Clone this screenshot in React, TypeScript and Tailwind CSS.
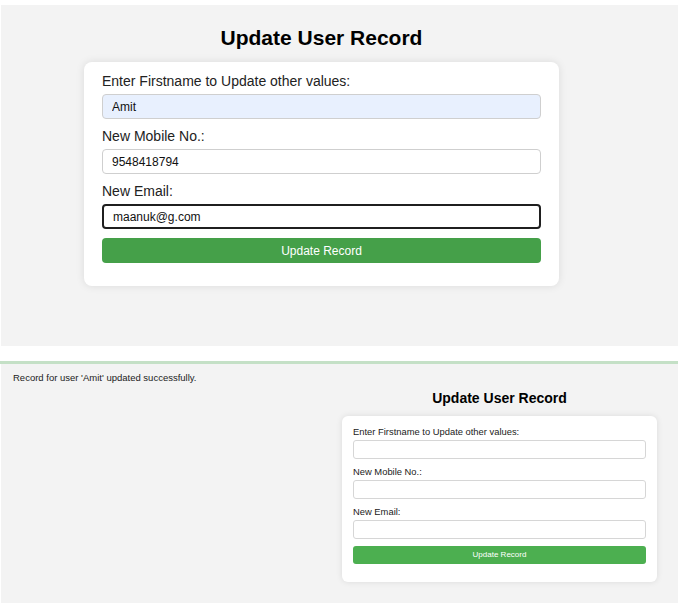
import React from 'react';

type Size = 'large' | 'small';

const styles = {
  large: {
    title: 'text-[21px] leading-[24px] font-bold text-black text-center mb-[12px]',
    card: 'bg-white rounded-[8px] shadow-[0_0_8px_rgba(0,0,0,0.1)] pt-[11px] pb-[23px] px-[18px]',
    label: 'block text-[14px] leading-[16px] text-[#222] mb-[5px]',
    input: 'block w-full h-[25px] px-[9px] text-[12px] text-[#111] rounded-[4px] mb-[9px] outline-none',
    border: 'border border-[#cfcfcf]',
    button: 'block w-full h-[25px] rounded-[4px] bg-[#45a049] text-white text-[12px]',
  },
  small: {
    title: 'text-[14px] leading-[16px] font-bold text-black text-center mb-[10px]',
    card: 'bg-white rounded-[6px] shadow-[0_0_6px_rgba(0,0,0,0.1)] pt-[10px] pb-[18px] px-[11px]',
    label: 'block text-[9.4px] leading-[11px] text-[#222] mb-[3px]',
    input: 'block w-full h-[19px] px-[6px] text-[8px] rounded-[3px] mb-[7px] outline-none bg-white',
    border: 'border border-[#d6d6d6]',
    button: 'block w-full h-[18px] rounded-[3px] bg-[#4caf50] text-white text-[8px]',
  },
};

interface UpdateFormProps {
  size: Size;
  firstname?: string;
  mobile?: string;
  email?: string;
}

const UpdateForm: React.FC<UpdateFormProps> = ({ size, firstname = '', mobile = '', email = '' }) => {
  const s = styles[size];
  const filled = size === 'large';
  return (
    <div>
      <h2 className={s.title}>Update User Record</h2>
      <div className={s.card}>
        <label className={s.label}>Enter Firstname to Update other values:</label>
        <input
          type="text"
          defaultValue={firstname}
          className={`${s.input} ${s.border} ${filled ? 'bg-[#e8f0fe]' : ''}`}
        />
        <label className={s.label}>New Mobile No.:</label>
        <input type="text" defaultValue={mobile} className={`${s.input} ${s.border} bg-white`} />
        <label className={s.label}>New Email:</label>
        <input
          type="text"
          defaultValue={email}
          className={`${s.input} bg-white ${filled ? 'border-2 border-[#1f1f1f] px-[8px]' : s.border}`}
        />
        <button type="button" className={s.button}>
          Update Record
        </button>
      </div>
    </div>
  );
};

export default function App() {
  return (
    <div className="min-h-[607px] bg-white pt-[5px] font-['Liberation_Sans',Arial,sans-serif]">
      <div className="ml-[1px] bg-[#f3f3f3] pt-[21px] pb-[60px]">
        <div className="ml-[83px] w-[475px]">
          <UpdateForm size="large" firstname="Amit" mobile="9548418794" email="maanuk@g.com" />
        </div>
      </div>

      <div className="h-[15px]" />
      <div className="h-[3px] bg-[#c4e0c6]" />

      <div className="ml-[1px] bg-[#f3f3f3] pt-[8px] pb-[21px]">
        <p className="pl-[12px] text-[9.5px] leading-[11px] text-[#222] mb-[7px]">
          Record for user 'Amit' updated successfully.
        </p>
        <div className="ml-[341px] w-[315px]">
          <UpdateForm size="small" />
        </div>
      </div>
    </div>
  );
}
